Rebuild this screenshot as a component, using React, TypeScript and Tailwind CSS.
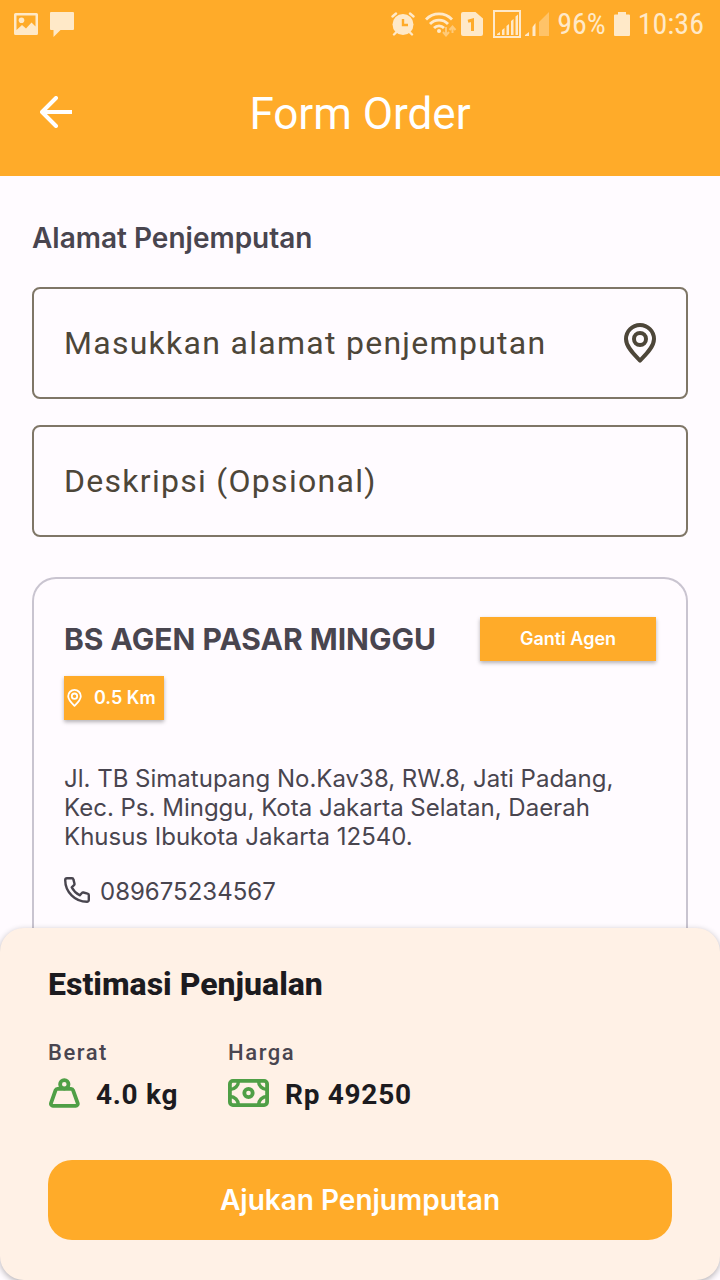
import React from "react";

type IconProps = { className?: string; stroke?: number };

function PinIcon({ className, stroke = 4 }: IconProps) {
  return (
    <svg viewBox="0 0 32 40" fill="none" stroke="currentColor" strokeWidth={stroke} strokeLinejoin="round" className={className} aria-hidden="true">
      <path d="M16 37.6C10.500 32 2 24 2 16a14 14 0 0 1 28 0c0 8-8.500 16-14 21.600Z" />
      <circle cx="16" cy="16" r="6" />
    </svg>
  );
}

function ArrowLeftIcon() {
  return (
    <svg viewBox="0 0 32 32" fill="none" stroke="currentColor" strokeWidth="4" className="size-8" aria-hidden="true">
      <path d="M32 16H4" />
      <path d="M16 2 2 16l14 14" strokeLinecap="round" strokeLinejoin="round" />
    </svg>
  );
}

function PhoneIcon() {
  return (
    <svg viewBox="0 0 26 26" fill="none" stroke="currentColor" strokeWidth="2.400" strokeLinecap="round" strokeLinejoin="round" className="size-[26px]" aria-hidden="true">
      <path d="M3 1.200h5a1.500 1.500 0 0 1 1.400 1.200l1.100 4.300a1.500 1.500 0 0 1-.5 1.500L7.700 10.300c1.800 3.600 4.400 6.200 8 8l2.200-2.300a1.500 1.500 0 0 1 1.500-.5l4.200 1.100a1.500 1.500 0 0 1 1.200 1.400V23a1.800 1.800 0 0 1-1.800 1.800C11 24.800 1.200 15 1.200 3A1.800 1.800 0 0 1 3 1.200Z" />
    </svg>
  );
}

function WeightIcon() {
  return (
    <svg viewBox="0 0 32 30" fill="none" stroke="currentColor" strokeWidth="3.800" strokeLinejoin="round" className="h-[30px] w-8" aria-hidden="true">
      <circle cx="16.300" cy="6.300" r="4.200" />
      <path d="M9.500 10.800h13.600a2 2 0 0 1 1.900 1.400l4.700 13a2 2 0 0 1-1.900 2.600H4.900a2 2 0 0 1-1.900-2.600l4.600-13a2 2 0 0 1 1.900-1.400Z" />
    </svg>
  );
}

function CashIcon() {
  return (
    <svg viewBox="0 0 41 28" fill="none" stroke="currentColor" strokeWidth="3.800" className="h-7 w-[41px]" aria-hidden="true">
      <rect x="1.900" y="1.900" width="37.200" height="24.200" rx="3" />
      <circle cx="20.500" cy="14" r="4.200" />
      <path d="M2 10.500A8.500 8.500 0 0 0 10.500 2M30.500 2a8.500 8.500 0 0 0 8.500 8.500M39 17.500A8.500 8.500 0 0 0 30.500 26M10.500 26A8.500 8.500 0 0 0 2 17.500" strokeWidth="3.400" />
    </svg>
  );
}

function PictureIcon() {
  return (
    <svg viewBox="0 0 24 24" fill="currentColor" className="size-6" aria-hidden="true">
      <path fillRule="evenodd" d="M1.500 1h21A1.500 1.500 0 0 1 24 2.500v19a1.500 1.500 0 0 1-1.500 1.500h-21A1.500 1.500 0 0 1 0 21.500v-19A1.500 1.500 0 0 1 1.500 1ZM2.500 3.500v14.500l5.500-5 4 3.500 5.500-6 4 4V3.500Z" />
      <circle cx="7.500" cy="8.200" r="2.800" />
    </svg>
  );
}

function MessageIcon() {
  return (
    <svg viewBox="0 0 24 26" fill="currentColor" className="h-[26px] w-6" aria-hidden="true">
      <path d="M1 1h22a1 1 0 0 1 1 1v16a1 1 0 0 1-1 1H10.500l-7 7v-7H1a1 1 0 0 1-1-1V2a1 1 0 0 1 1-1Z" />
    </svg>
  );
}

function AlarmIcon() {
  return (
    <svg viewBox="0 0 24 24" fill="none" stroke="currentColor" strokeWidth="2.400" strokeLinecap="round" className="size-6" aria-hidden="true">
      <circle cx="12" cy="12.500" r="10.500" fill="currentColor" stroke="none" />
      <path d="M1.500 4.500 5 1.500M22.500 4.500 19 1.500M5 20.500l-2 2M19 20.500l2 2" />
      <path d="M12 7v6h5" className="stroke-[#ffab29]" strokeLinecap="butt" />
    </svg>
  );
}

function WifiIcon() {
  return (
    <svg viewBox="0 0 32 25" fill="none" stroke="currentColor" strokeWidth="2.800" className="h-[25px] w-8" aria-hidden="true">
      <path d="M1 7.500a18 18 0 0 1 26 0M5 12a12.500 12.500 0 0 1 18 0M9 16a7 7 0 0 1 10 0" />
      <circle cx="14" cy="19" r="2" fill="currentColor" stroke="none" />
      <path d="M21 15v8m-3-3 3 3.500 3-3.500M27.500 21v-6m-3 3 3-3.500 3 3.500" strokeWidth="2" className="opacity-50" />
    </svg>
  );
}

function SimIcon() {
  return (
    <svg viewBox="0 0 22 24" fill="currentColor" className="h-6 w-[22px]" aria-hidden="true">
      <path d="M2 0h12.500L22 6.500V22a2 2 0 0 1-2 2H2a2 2 0 0 1-2-2V2a2 2 0 0 1 2-2Z" />
      <path d="M7 9.200 11.500 8v11" fill="none" className="stroke-[#ffab29]" strokeWidth="3" />
    </svg>
  );
}

function BoxedSignalIcon() {
  return (
    <svg viewBox="0 0 28 28" fill="currentColor" className="size-7" aria-hidden="true">
      <rect x="1" y="1" width="26" height="26" fill="none" stroke="currentColor" strokeWidth="2" />
      <path d="M4 25v-1l3-2v3ZM9 25v-5l2.500-2v7ZM13.500 25v-9l2.500-2v11ZM18 25V11l2.500-2v16ZM22.500 25V6.500L25 4.500V25Z" />
    </svg>
  );
}

function SignalIcon() {
  return (
    <svg viewBox="0 0 24 24" fill="currentColor" className="size-6" aria-hidden="true">
      <path d="M0 24v-1l4-3v4ZM7.500 24v-9l3-4v13Z" />
      <path d="M14 24V10L24 0v24Z" className="opacity-40" />
    </svg>
  );
}

function BatteryIcon() {
  return (
    <svg viewBox="0 0 16 24" fill="currentColor" className="h-6 w-4" aria-hidden="true">
      <path d="M4 0h8v2.500h3a1 1 0 0 1 1 1V23a1 1 0 0 1-1 1H1a1 1 0 0 1-1-1V3.500a1 1 0 0 1 1-1h3Z" />
    </svg>
  );
}

function StatusBar() {
  return (
    <div className="flex h-12 items-center justify-between pr-4 pl-3.5 text-[#ffe9c8]">
      <div className="flex items-center gap-3">
        <PictureIcon />
        <MessageIcon />
      </div>
      <div className="flex items-center gap-2 font-[Roboto_Condensed,Roboto,sans-serif] text-[30px] leading-8">
        <div className="flex items-center gap-2.5">
          <AlarmIcon />
          <div className="flex items-center gap-1">
            <WifiIcon />
            <SimIcon />
          </div>
          <div className="flex items-center gap-1">
            <BoxedSignalIcon />
            <SignalIcon />
          </div>
        </div>
        <span>96%</span>
        <BatteryIcon />
        <span>10:36</span>
      </div>
    </div>
  );
}

function AgentCard() {
  return (
    <section className="mt-10 flex-1 rounded-t-3xl border-2 border-b-0 border-[#c9c4d0] px-[30px] pt-[38px] pb-5 font-[Inter,sans-serif] text-[#49454f]">
      <div className="flex items-center justify-between">
        <h3 className="text-[30px] leading-[44px] font-bold">BS AGEN PASAR MINGGU</h3>
        <button type="button" className="h-11 w-44 bg-[#ffab29] text-lg font-semibold text-white shadow-[0_2px_4px_rgba(0,0,0,0.3)]">
          Ganti Agen
        </button>
      </div>
      <div className="mt-[15px] flex h-11 w-[100px] items-center gap-3 bg-[#ffab29] pl-[3px] text-lg font-semibold text-white shadow-[0_2px_4px_rgba(0,0,0,0.3)]">
        <PinIcon className="h-[18px] w-[15px]" />
        0.5 Km
      </div>
      <p className="mt-11 text-2xl leading-[29px]">
        Jl. TB Simatupang No.Kav38, RW.8, Jati Padang, Kec. Ps. Minggu, Kota Jakarta Selatan, Daerah Khusus Ibukota Jakarta 12540.
      </p>
      <p className="mt-[26px] flex items-center gap-2.5 text-2xl leading-[30px]">
        <span className="pb-1">
          <PhoneIcon />
        </span>
        089675234567
      </p>
    </section>
  );
}

function EstimateSheet() {
  return (
    <section className="rounded-3xl bg-[#fff1e6] px-12 pt-9 pb-10 shadow-[0_2px_6px_rgba(0,0,0,0.3)]">
      <h2 className="text-[32px] leading-10 font-extrabold text-[#1c1b1f]">Estimasi Penjualan</h2>
      <dl className="mt-[37px] flex gap-[50px]">
        <div>
          <dt className="text-[22px] leading-6 font-medium tracking-[0.07em] text-[#49454f]">Berat</dt>
          <dd className="mt-2.5 flex h-10 items-center gap-4 text-[28px] font-bold tracking-wide text-[#1c1b1f]">
            <span className="pb-1 text-[#4f9f46]">
              <WeightIcon />
            </span>
            4.0 kg
          </dd>
        </div>
        <div>
          <dt className="text-[22px] leading-6 font-medium tracking-[0.07em] text-[#49454f]">Harga</dt>
          <dd className="mt-2.5 flex h-10 items-center gap-4 text-[28px] font-bold tracking-wide text-[#1c1b1f]">
            <span className="pb-1 text-[#4f9f46]">
              <CashIcon />
            </span>
            Rp 49250
          </dd>
        </div>
      </dl>
      <button type="submit" className="mt-[45px] h-20 w-full rounded-3xl bg-[#ffab29] font-[Inter,sans-serif] text-[28px] font-semibold text-white">
        Ajukan Penjumputan
      </button>
    </section>
  );
}

export default function App() {
  return (
    <form className="flex min-h-screen flex-col bg-[#fffbff] font-[Roboto,sans-serif]" onSubmit={(e) => e.preventDefault()}>
      <header className="bg-[#ffab29]">
        <StatusBar />
        <div className="grid h-32 grid-cols-[32px_1fr_32px] items-center px-10 text-white">
          <button type="button" aria-label="Kembali">
            <ArrowLeftIcon />
          </button>
          <h1 className="pt-1 text-center text-[44px] leading-[52px]">Form Order</h1>
        </div>
      </header>
      <main className="flex flex-1 flex-col px-8 pt-11">
        <label htmlFor="address" className="font-[Inter,sans-serif] text-[28px] leading-9 font-semibold text-[#49454f]">
          Alamat Penjemputan
        </label>
        <div className="mt-[31px] flex h-28 items-center rounded-lg border-2 border-[#7f7667] pr-[30px] text-[#4d4639]">
          <input
            id="address"
            type="text"
            placeholder="Masukkan alamat penjemputan"
            className="h-full min-w-0 flex-1 bg-transparent pl-[30px] text-[32px] tracking-[0.04em] outline-none placeholder:text-[#4d4639]"
          />
          <PinIcon className="h-10 w-8" />
        </div>
        <input
          type="text"
          aria-label="Deskripsi (Opsional)"
          placeholder="Deskripsi (Opsional)"
          className="mt-[26px] h-28 w-full rounded-lg border-2 border-[#7f7667] bg-transparent px-[30px] text-[32px] tracking-[0.04em] text-[#4d4639] outline-none placeholder:text-[#4d4639]"
        />
        <AgentCard />
      </main>
      <EstimateSheet />
    </form>
  );
}
